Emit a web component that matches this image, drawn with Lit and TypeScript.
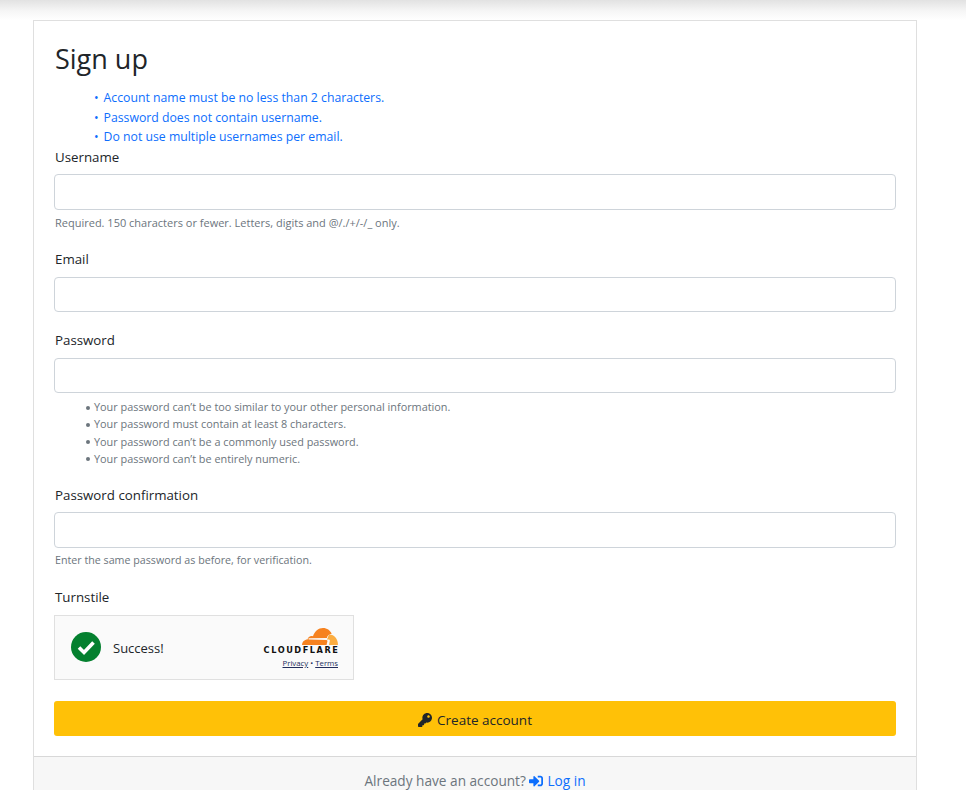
import { LitElement, html, css, svg } from "lit";
import { customElement } from "lit/decorators.js";

const KEY = "M512 176.001C512 273.203 433.202 352 336 352c-11.22 0-22.19-1.062-32.827-3.069l-24.012 27.014A23.999 23.999 0 0 1 261.223 384H224v40c0 13.255-10.745 24-24 24h-40v40c0 13.255-10.745 24-24 24H24c-13.255 0-24-10.745-24-24v-78.059c0-6.365 2.529-12.47 7.029-16.971l161.802-161.802C163.108 213.814 160 195.271 160 176 160 78.798 238.797.001 335.999 0 433.488-.001 512 78.511 512 176.001zM336 128c0 26.51 21.49 48 48 48s48-21.49 48-48-21.49-48-48-48-48 21.49-48 48z";
const LOGIN = "M416 448h-84c-6.6 0-12-5.4-12-12v-40c0-6.6 5.4-12 12-12h84c17.7 0 32-14.3 32-32V160c0-17.7-14.3-32-32-32h-84c-6.6 0-12-5.4-12-12V76c0-6.6 5.4-12 12-12h84c53 0 96 43 96 96v192c0 53-43 96-96 96zm-47-201L201 79c-15-15-41-4.5-41 17v96H24c-13.3 0-24 10.7-24 24v96c0 13.3 10.7 24 24 24h136v96c0 21.5 26 32 41 17l168-168c9.3-9.4 9.3-24.6 0-34z";

@customElement("app-root")
export class AppRoot extends LitElement {
  static styles = css`
    :host {
      display: block;
      height: 790px;
      overflow: hidden;
      background: #fff;
      font-family: "Open Sans", "Noto Sans", sans-serif;
      color: #212529;
      font-size: 13.5px;
    }
    .topshade { height: 20px; background: linear-gradient(#e2e2e2, #f6f6f6 55%, #fff); }
    .card { margin: 0 49px 0 33px; border: 1px solid rgba(0,0,0,.125); }
    .body { padding: 20px; }
    h1 { margin: 0 0 11px 1px; font-size: 27px; font-weight: 400; line-height: 36px; }
    .rules { margin: 0 0 1px; padding: 0 0 0 40px; list-style: none; color: #0d6efd; font-size: 12.25px; line-height: 19.5px; }
    .rules li::before { content: "•"; margin-right: 5px; }
    label { display: block; font-size: 13.3px; line-height: 19px; margin: 0 0 7.5px 1px; }
    input { display: block; box-sizing: border-box; width: 100%; height: 35.5px; border: 1px solid #ced4da; border-radius: 4px; background: #fff; padding: 0 12px; }
    .help { color: #6c757d; font-size: 11px; line-height: 17px; margin: 4px 0 0 1px; }
    .help.narrow { font-size: 10.7px; }
    .field { margin-bottom: 18.5px; }
    .field.wide { margin-bottom: 19.2px; }
    .field.helped { margin-bottom: 19.5px; }
    .tips { margin: 5px 0 0; padding: 0 0 0 40px; list-style: none; color: #6c757d; font-size: 10.87px; line-height: 17.3px; }
    .tips li::before { content: ""; display: inline-block; width: 4px; height: 4px; border-radius: 50%; background: #6c757d; margin: 0 4.5px 1.5px -8.5px; vertical-align: middle; }
    .ts { box-sizing: border-box; width: 300px; height: 65px; border: 1px solid #e0e0e0; background: #fafafa; display: flex; align-items: center; padding: 0 15px 0 16px; }
    .ok { width: 30px; height: 30px; flex: none; }
    .ts .msg { margin: 1px 0 0 12px; font-size: 13px; flex: 1; }
    .brand { display: flex; flex-direction: column; align-items: flex-end; margin-top: 2px; }
    .cloud { width: 36px; height: 17px; display: block; margin-bottom: 1px; }
    .word { font-family: "DejaVu Sans", sans-serif; font-weight: 700; font-size: 8.2px; letter-spacing: 1.55px; line-height: 8px; color: #111; margin-right: -1.5px; }
    .links { font-size: 7.8px; line-height: 11px; margin-top: 4px; color: #232e5c; }
    .links u { text-underline-offset: 1px; }
    .btn { box-sizing: border-box; display: flex; align-items: center; justify-content: center; gap: 5px; height: 35px; padding-top: 3px; margin-top: 21px; background: #ffc107; border-radius: 3px; font-size: 13.5px; }
    .btn svg, .foot svg { width: 14px; height: 14px; fill: currentColor; display: block; }
    .foot { border-top: 1px solid rgba(0,0,0,.125); background: #f7f7f7; padding: 14.5px 0 9px; text-align: center; color: #6c757d; font-size: 13.65px; line-height: 20px; }
    .foot a { color: #0d6efd; display: inline-flex; align-items: center; gap: 4px; vertical-align: top; }
  `;

  render() {
    return html`
      <div class="topshade"></div>
      <div class="card">
        <div class="body">
          <h1>Sign up</h1>
          <ul class="rules">
            <li>Account name must be no less than 2 characters.</li>
            <li>Password does not contain username.</li>
            <li>Do not use multiple usernames per email.</li>
          </ul>
          <div class="field helped">
            <label>Username</label>
            <input type="text" />
            <div class="help">Required. 150 characters or fewer. Letters, digits and @/./+/-/_ only.</div>
          </div>
          <div class="field wide">
            <label>Email</label>
            <input type="email" />
          </div>
          <div class="field">
            <label>Password</label>
            <input type="password" />
            <ul class="tips">
              <li>Your password can’t be too similar to your other personal information.</li>
              <li>Your password must contain at least 8 characters.</li>
              <li>Your password can’t be a commonly used password.</li>
              <li>Your password can’t be entirely numeric.</li>
            </ul>
          </div>
          <div class="field helped">
            <label>Password confirmation</label>
            <input type="password" />
            <div class="help narrow">Enter the same password as before, for verification.</div>
          </div>
          <label>Turnstile</label>
          <div class="ts">
            <svg class="ok" viewBox="0 0 30 30">
              <circle cx="15" cy="15" r="15" fill="#04802f"></circle>
              <path d="M8 15.500l5 5 9.500-10" fill="none" stroke="#fff" stroke-width="3.600"></path>
            </svg>
            <span class="msg">Success!</span>
            <div class="brand">
              <svg class="cloud" viewBox="0 0 36 17">
                ${svg`<path fill="#fbad41" d="M27 6.500c5-.3 9 4 9 10.500H27l.8-4c.2-1-.3-1.500-1.200-1.500l-1.600-.1z"></path>
                <path fill="#f6821f" d="M0 17c.2-3.200 2.500-5.500 5.500-5.500.5-2.500 3-4 5.500-3.200C12.500 3.500 16.500 0 21 0c4 0 7.200 2.300 8.700 5.800-2.500.2-4.200 1.700-4.900 4.200L7 10.300c-.8.100-.8 1.100 0 1.200l17.300.6c1 .1 1.300.6 1 1.700L24.500 17z"></path>`}
              </svg>
              <div class="word">CLOUDFLARE</div>
              <div class="links"><u>Privacy</u> • <u>Terms</u></div>
            </div>
          </div>
          <div class="btn"><svg viewBox="0 0 512 512"><path d=${KEY}></path></svg>Create account</div>
        </div>
        <div class="foot">Already have an account? <a><svg viewBox="0 0 512 512"><path d=${LOGIN}></path></svg>Log in</a></div>
      </div>
    `;
  }
}
